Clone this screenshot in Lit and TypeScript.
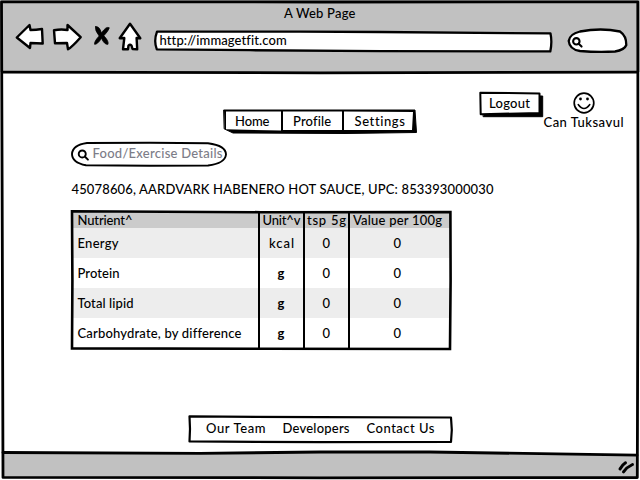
import { LitElement, html, css, svg } from "lit";
import { customElement, property } from "lit/decorators.js";
import { styleMap } from "lit/directives/style-map.js";

/** A single line of text spread evenly over a given width. */
@customElement("fit-text")
class FitText extends LitElement {
  @property() text = "";
  @property({ type: Number }) w = 0;

  static styles = css`
    :host { display: block; flex: none; height: 16px; }
    .line { display: block; height: 16px; }
    .ink { display: inline-block; white-space: pre; line-height: 16px; }
  `;

  updated() {
    const ink = this.renderRoot.querySelector(".ink") as HTMLElement;
    ink.style.letterSpacing = "0px";
    const natural = ink.getBoundingClientRect().width;
    const gaps = this.text.length - 1;
    if (gaps > 0) ink.style.letterSpacing = `${(this.w - natural) / gaps}px`;
  }

  render() {
    return html`<span class="line" style=${styleMap({ width: `${this.w}px` })}><span class="ink">${this.text}</span></span>`;
  }
}

const fit = (text: string, w: number, cls = "") =>
  html`<fit-text class=${cls} .text=${text} .w=${w}></fit-text>`;

const magnifier = svg`<circle cx="5" cy="5" r="3.7"/><path d="M7.7 7.7L11 11"/>`;

@customElement("nutrient-table")
class NutrientTable extends LitElement {
  rows: [string, number, string, number][] = [
    ["Energy", 41, "kcal", 25],
    ["Protein", 42, "g", 8],
    ["Total lipid", 56, "g", 8],
    ["Carbohydrate, by difference", 163.5, "g", 8],
  ];

  static styles = css`
    :host { display: block; position: relative; width: 380px; height: 140px; }
    .row { display: grid; grid-template-columns: 187px 45px 45px 101px; height: 30px; margin-left: 1px; width: 378px; align-items: start; }
    .row > * { margin-top: 7px; }
    .row:nth-child(odd) { background: #fff; }
    .row:nth-child(even) { background: #ededed; }
    .row.head { height: 17px; box-sizing: border-box; background: #cbcbcb; }
    .row.head > * { margin-top: 1px; }
    .name { margin-left: 5.5px; }
    .mid { justify-self: center; }
    .shift { position: relative; left: -2px; }
    .bold { font-weight: 700; }
    svg { position: absolute; left: 0; top: 0; width: 100%; height: 100%; overflow: visible; fill: none; stroke: #000; }
  `;

  render() {
    return html`
      <div class="row head">
        ${fit("Nutrient^", 55, "name")} ${fit("Unit^v", 38, "mid")}
        ${fit("tsp 5g", 39, "mid")} ${fit("Value per 100g", 89, "mid shift")}
      </div>
      ${this.rows.map(([name, w, unit, uw]) => html`
        <div class="row">
          ${fit(name, w, "name")} ${fit(unit, uw, unit === "g" ? "mid bold" : "mid")}
          ${fit("0", 8, "mid")} ${fit("0", 8, "mid shift")}
        </div>`)}
      <svg viewBox="0 0 380 140">
        <path stroke-width="2.6" d="M1 0.3L190 1.2L379.4 1L379.6 70L379 138L190 137.8L1 137.4L1.4 70Z"/>
        <path stroke-width="2" d="M188 2V137M233 2V137M278 2V138"/>
      </svg>`;
  }
}

@customElement("app-root")
class AppRoot extends LitElement {
  static styles = css`
    :host { display: block; width: 640px; height: 480px; overflow: hidden; font-family: Lato, sans-serif; font-size: 13px; font-weight: 500; color: #000; background: #fff; }
    .window { position: relative; display: grid; grid-template-rows: 72px 1fr; height: 480px; }
    svg { fill: none; stroke: #000; stroke-linejoin: round; stroke-linecap: round; overflow: visible; }
    .frame, .edge { position: absolute; left: 0; top: 0; width: 100%; height: 100%; }
    .white { fill: #fff; }
    .solid { fill: #000; }
    .row > fit-text, .over { position: relative; }
    .row { display: flex; position: relative; }
    .chrome { background: #c1c1c1; }
    .title { padding: 5px 0 0 284px; height: 16px; }
    .toolbar { height: 30px; }
    .icons { width: 154px; height: 30px; flex: none; }
    .url { width: 398px; height: 21px; margin-top: 9px; padding: 2px 0 0 5.5px; box-sizing: border-box; flex: none; }
    .find { width: 59px; height: 24px; margin: 7px 0 0 16px; flex: none; }
    .top { height: 64px; }
    .nav { width: 192px; height: 24px; margin: 37px 0 0 224px; padding: 4px 0 0 11px; box-sizing: border-box; gap: 23.5px; flex: none; }
    .logout { width: 64px; height: 25px; margin: 20px 0 0 64px; padding: 3px 0 0 9px; box-sizing: border-box; flex: none; align-self: flex-start; }
    .user { display: flex; flex-direction: column; align-items: center; margin: 20px 0 0 -1px; width: 81px; }
    .face { width: 22px; height: 22px; }
    .search { width: 156px; height: 24px; margin: 6px 0 0 71px; padding: 3px 0 0 21.5px; box-sizing: border-box; color: #7d7d88; }
    .product { margin: 15px 0 0 71.5px; height: 16px; }
    nutrient-table { margin: 14px 0 0 71px; }
    .links { width: 265px; height: 28px; margin: 64px 0 0 188px; padding: 5px 0 0 18px; gap: 17px; box-sizing: border-box; }
  `;

  render() {
    return html`<div class="window">
      <svg class="frame" viewBox="0 0 640 480">
        <path fill="#c1c1c1" stroke="none" d="M3 453L420 452L637 455V478H3Z"/>
      </svg>
      <header class="chrome">
        <div class="row title">${fit("A Web Page", 71.5)}</div>
        <div class="row toolbar">
          <svg class="icons" viewBox="0 21 154 30">
            <g class="white" stroke-width="2.4">
              <path d="M16.8 37.5L29.5 25L30.5 30Q36 30 42 29L42.7 43.5L30.5 43L30 48Q25 44 16.8 37.5Z"/>
              <path d="M80.7 37.2L67.5 25L67.5 30Q61 29 54 30.2L55 43.3L67 43L68 49.3Q72 47 80.7 37.2Z"/>
              <path d="M130 23.7L140.3 38.2L136.6 38L137.2 49.3L132.5 49L131.5 45.5Q130 44 128.5 45.5L128 49.3L123 49.3L124.3 38L119.7 38.2Z"/>
            </g>
            <path class="solid" stroke-width=".8" d="M95.5 26.8Q99 25.5 101.5 33Q106 26 109.3 27.8Q108.5 31 103.8 35.8Q109 41 108 44.3Q104.5 45 101.5 38.3Q97.5 44.5 94.6 44.3Q94 41.5 99.2 36Q94.7 30.5 95.5 26.8Z"/>
          </svg>
          <div class="row url">
            <svg class="edge" viewBox="154 30 398 21">
              <path class="white" stroke-width="2.3" d="M157 31.6L300 31.6L380 32L550.5 33.4Q552.3 42 550.3 51.4L380 51.2L250 50.2L156.8 49.3Q153.5 41 157 31.6Z"/>
            </svg>
            ${fit("http://immagetfit.com", 126.5)}
          </div>
          <svg class="find" viewBox="568 28 59 24">
            <path class="white" stroke-width="2.3" d="M580 31.5Q601 27.5 620 31.5Q626.5 36 626.3 45Q624.5 50 615 51.5Q598 52.5 580 51Q569.5 49.5 568.7 41Q569.5 34 580 31.5Z"/>
            <g transform="translate(572 37) scale(.87)" stroke-width="2.4">${magnifier}</g>
          </svg>
        </div>
      </header>
      <main class="over">
        <div class="row top">
          <nav class="row nav">
            <svg class="edge" viewBox="224 109 192 24">
              <path class="solid" stroke-width="1" d="M224 110L415 110L416.5 132.5L345 133.5L233 133L224.5 129Z"/>
              <path class="white" stroke="none" d="M226 111.5L281 111.5V130.5L226 129.3ZM283 111.5H342V130H283ZM344 111.5L413 112L412 130H344Z"/>
            </svg>
            ${fit("Home", 34.5)} ${fit("Profile", 38)} ${fit("Settings", 50)}
          </nav>
          <div class="row logout">
            <svg class="edge" viewBox="480 92 64 25">
              <path class="solid" stroke-width="1" d="M483 96H542.7V116.7H483.5Z"/>
              <path class="white" stroke-width="2" d="M480.3 92.7L539.5 93.4V113L480.7 114.2Z"/>
            </svg>
            ${fit("Logout", 41)}
          </div>
          <div class="user">
            <svg class="face" viewBox="572.5 92.5 22 22">
              <circle cx="583.5" cy="103.5" r="9.8" stroke-width="1.7"/>
              <g fill="#000" stroke="none"><circle cx="580" cy="99.5" r="1.4"/><circle cx="587" cy="99.5" r="1.4"/></g>
              <path stroke-width="1.5" d="M577.7 105Q583.5 113 589.3 105"/>
            </svg>
            ${fit("Can Tuksavul", 80)}
          </div>
        </div>
        <div class="row search">
          <svg class="edge" viewBox="71 142 156 24">
            <path class="white" stroke-width="1.9" d="M87 143L150 142.8L208 143.2Q226 145.5 226 154.5Q225 163.5 208 165.5L150 165.8L86 165.3Q72 162.5 72 154Q72.5 145 87 143Z"/>
            <g transform="translate(77.5 149.2) scale(.95)" stroke-width="2">${magnifier}</g>
          </svg>
          ${fit("Food/Exercise Details", 130)}
        </div>
        <div class="row product">${fit("45078606, AARDVARK HABENERO HOT SAUCE, UPC: 853393000030", 422)}</div>
        <nutrient-table></nutrient-table>
        <nav class="row links">
          <svg class="edge" viewBox="188 415 265 28">
            <path class="white" stroke-width="2.2" d="M189.5 416.4L320 417.2L451 417.5L451.8 430L451 442L320 442.2L189.5 441.4L190 429Z"/>
          </svg>
          ${fit("Our Team", 59.5)} ${fit("Developers", 67)} ${fit("Contact Us", 68)}
        </nav>
      </main>
      <svg class="frame" viewBox="0 0 640 480">
        <g stroke-width="2.8">
          <path d="M1.5 1.8L320 2L637.8 1.8L638 240L637.3 477.6L320 477.8L3 477.4L2.3 240Z"/>
          <path d="M3 72.2L320 72.8L637 72.2M3 452.5L200 453.4L320 452L430 452L637 455.2"/>
        </g>
        <path stroke-width="3" d="M620 469Q622 465 625.5 462.8M623.5 471.8Q627 467 632.5 464.5"/>
      </svg>
    </div>`;
  }
}
